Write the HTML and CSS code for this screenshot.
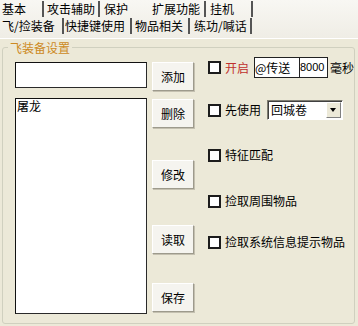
FILE: index.html
```html
<!DOCTYPE html>
<html>
<head>
  <meta charset="utf-8">
  <title>飞/捡装备</title>
  <link rel="stylesheet" href="styles.css">
</head>
<body>
  <div class="tabs">
    <div class="tab-row row-top">
      <span class="tab">基本</span>
      <span class="tab">攻击辅助</span>
      <span class="tab">保护</span>
      <span class="tab">扩展功能</span>
      <span class="tab">挂机</span>
    </div>
    <div class="tab-row row-bottom">
      <span class="tab">飞/捡装备</span>
      <span class="tab">快捷键使用</span>
      <span class="tab">物品相关</span>
      <span class="tab">练功/喊话</span>
    </div>
  </div>

  <div class="panel">
    <div class="group">
      <div class="group-title">飞装备设置</div>
      <div class="group-body">
        <div class="edit-col">
          <div class="edit"></div>
          <div class="list">
            <div class="list-item">屠龙</div>
          </div>
        </div>

        <div class="btn-col">
          <button class="btn btn-add">添加</button>
          <button class="btn btn-del">删除</button>
          <button class="btn btn-edit">修改</button>
          <button class="btn btn-load">读取</button>
          <button class="btn btn-save">保存</button>
        </div>

        <div class="opt-col">
          <div class="opt opt-open">
            <span class="check"></span>
            <span class="label-red">开启</span>
            <div class="field field-name">@传送</div>
            <div class="field field-ms">8000</div>
            <span class="unit">毫秒</span>
          </div>
          <div class="opt opt-first">
            <span class="check"></span>
            <span>先使用</span>
            <div class="select">
              <span class="select-text">回城卷</span>
              <span class="select-arrow"></span>
            </div>
          </div>
          <div class="opt opt-match">
            <span class="check"></span>
            <span>特征匹配</span>
          </div>
          <div class="opt opt-around">
            <span class="check"></span>
            <span>捡取周围物品</span>
          </div>
          <div class="opt opt-sys">
            <span class="check"></span>
            <span>捡取系统信息提示物品</span>
          </div>
        </div>
      </div>
    </div>
  </div>
</body>
</html>
```

FILE: styles.css
```css
body {
  margin: 0;
  width: 358px;
  height: 326px;
  overflow: hidden;
  background-color: #ece9d8;
  font-family: "Noto Sans CJK SC", sans-serif;
  font-size: 12px;
  color: #000;
}

/* Tab strip, two rows */
.tabs {
  height: 38px;
  background: linear-gradient(#f8f7f3, #efede5);
}

.tab-row {
  display: flex;
  height: 17px;
}

.tab {
  box-sizing: border-box;
  height: 16px;
  margin-top: 1px;
  line-height: 15px;
  white-space: nowrap;
  border-right: 2px solid #555;
}

.row-top .tab:nth-child(1) { width: 44px; padding-left: 2px; }
.row-top .tab:nth-child(2) { width: 56px; padding-left: 3px; }
.row-top .tab:nth-child(3) { width: 52px; padding-left: 4px; border-right: none; }
.row-top .tab:nth-child(4) { width: 54px; padding-left: 0; }
.row-top .tab:nth-child(5) { width: 47px; padding-left: 4px; }

.row-bottom .tab:nth-child(1) { width: 64px; padding-left: 2px; }
.row-bottom .tab:nth-child(2) { width: 68px; padding-left: 1px; }
.row-bottom .tab:nth-child(3) { width: 58px; padding-left: 3px; }
.row-bottom .tab:nth-child(4) { width: 62px; padding-left: 4px; }

/* Page area */
.panel {
  border-top: 1px solid #fff;
  padding-top: 8px;
}

.group {
  box-sizing: border-box;
  width: 353px;
  height: 277px;
  margin-left: 2px;
  border: 1px solid #d0d0bf;
  border-radius: 3px;
}

.group-title {
  width: fit-content;
  margin: -7px 0 0 5px;
  padding: 0 2px;
  line-height: 13px;
  background-color: #ece9d8;
  color: #cc8a24;
}

.group-body {
  display: flex;
  align-items: flex-start;
  padding: 3px 0 0 12px;
}

/* Edit box and list */
.edit-col {
  width: 132px;
  margin-top: 5px;
}

.edit, .list {
  box-sizing: border-box;
  background-color: #fff;
  border: 1px solid #2a2a2a;
  border-top-color: #111;
  border-left-color: #111;
}

.edit { height: 26px; }

.list {
  height: 216px;
  margin-top: 10px;
}

.list-item {
  padding-left: 1px;
  line-height: 14px;
}

/* Buttons */
.btn-col {
  display: flex;
  flex-direction: column;
  width: 42px;
  margin: 5px 0 0 5px;
}

.btn {
  height: 29px;
  padding: 0;
  font: inherit;
  color: #000;
  background-color: #f5f4ef;
  border: 1px solid;
  border-color: #fff #9d9a8c #9d9a8c #fff;
  box-shadow: 1px 1px 0 #c4c0b0;
}
.btn-del  { margin-top: 8px; }
.btn-edit { margin-top: 32px; }
.btn-load { margin-top: 36px; }
.btn-save { margin-top: 29px; }

/* Options on the right */
.opt-col {
  margin-left: 14px;
}

.opt {
  display: flex;
  align-items: center;
  height: 20px;
  line-height: 14px;
  white-space: nowrap;
}
.opt-open   { height: 21px; }
.opt-first  { margin-top: 22px; }
.opt-match  { margin-top: 25px; }
.opt-around { margin-top: 26px; }
.opt-sys    { margin-top: 21px; }

.check {
  flex: none;
  box-sizing: border-box;
  width: 13px;
  height: 13px;
  margin-right: 4px;
  background-color: #fff;
  border: 2px solid #1c1c1c;
}

.label-red { color: #c0302c; }

.field {
  box-sizing: border-box;
  height: 21px;
  line-height: 19px;
  overflow: hidden;
  background-color: #fff;
  border: 1px solid #222;
}
.field-name {
  width: 46px;
  margin-left: 5px;
}
.field-ms {
  width: 29px;
  margin-left: -1px;
  font-family: "Liberation Sans", sans-serif;
  font-size: 11px;
}
.unit { margin-left: 2px; }

.select {
  display: flex;
  box-sizing: border-box;
  width: 76px;
  height: 20px;
  margin-left: 6px;
  background-color: #fff;
  border: 1px solid;
  border-color: #7f7d72 #fff #fff #7f7d72;
  box-shadow: inset 1px 1px 0 #404040;
}
.select-text {
  flex: 1;
  padding-left: 3px;
  line-height: 18px;
}
.select-arrow {
  display: flex;
  align-items: center;
  justify-content: center;
  box-sizing: border-box;
  width: 15px;
  margin: 1px 1px 1px 0;
  background-color: #ece9d8;
  border: 1px solid;
  border-color: #fff #808080 #808080 #fff;
}
.select-arrow::after {
  content: "";
  border-left: 3px solid transparent;
  border-right: 3px solid transparent;
  border-top: 4px solid #000;
}
```
